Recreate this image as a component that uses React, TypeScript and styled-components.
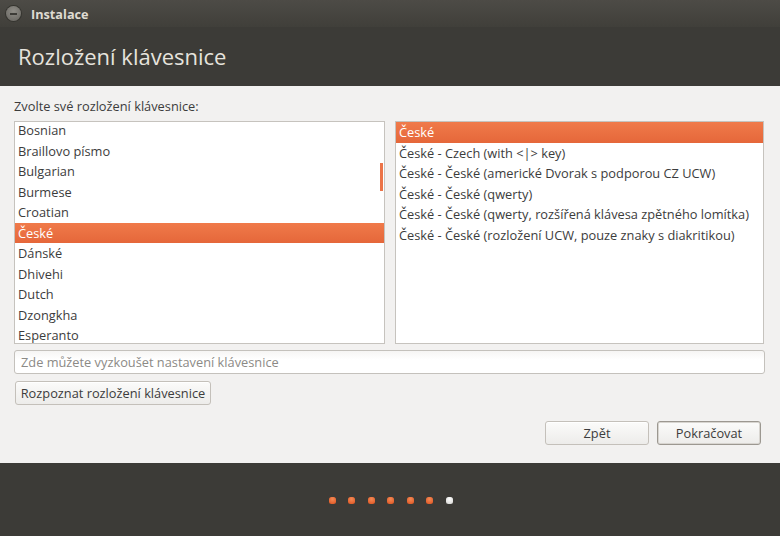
import React from 'react';
import styled, { createGlobalStyle } from 'styled-components';

const GlobalStyle = createGlobalStyle`
  html, body {
    margin: 0;
    padding: 0;
    background: #3c3b37;
  }
  * {
    box-sizing: border-box;
  }
`;

const layouts = [
  'Bosnian',
  'Braillovo písmo',
  'Bulgarian',
  'Burmese',
  'Croatian',
  'České',
  'Dánské',
  'Dhivehi',
  'Dutch',
  'Dzongkha',
  'Esperanto',
];

const variants = [
  'České',
  'České - Czech (with <|> key)',
  'České - České (americké Dvorak s podporou CZ UCW)',
  'České - České (qwerty)',
  'České - České (qwerty, rozšířená klávesa zpětného lomítka)',
  'České - České (rozložení UCW, pouze znaky s diakritikou)',
];

const App: React.FC = () => {
  return (
    <Window>
      <GlobalStyle />
      <TitleBar>
        <CloseButton>
          <span />
        </CloseButton>
        <WindowTitle>Instalace</WindowTitle>
      </TitleBar>
      <Header>
        <Heading>Rozložení klávesnice</Heading>
      </Header>
      <Content>
        <Label>Zvolte své rozložení klávesnice:</Label>
        <Lists>
          <ListBox>
            <ListInner $offset={-2}>
              {layouts.map((name) => (
                <Row key={name} $selected={name === 'České'}>
                  {name}
                </Row>
              ))}
            </ListInner>
            <ScrollThumb />
          </ListBox>
          <ListBox>
            <ListInner $offset={0}>
              {variants.map((name, i) => (
                <Row key={name} $selected={i === 0}>
                  {name}
                </Row>
              ))}
            </ListInner>
          </ListBox>
        </Lists>
        <Entry placeholder='Zde můžete vyzkoušet nastavení klávesnice' />
        <DetectButton>Rozpoznat rozložení klávesnice</DetectButton>
        <Actions>
          <Button>Zpět</Button>
          <Button $default>Pokračovat</Button>
        </Actions>
      </Content>
      <Footer>
        <Dots>
          {[0, 1, 2, 3, 4, 5, 6].map((i) => (
            <Dot key={i} $active={i < 6} />
          ))}
        </Dots>
      </Footer>
    </Window>
  );
};

export default App;

const Window = styled.div`
  width: 780px;
  height: 536px;
  display: flex;
  flex-direction: column;
  font-family: 'Open Sans', 'Liberation Sans', sans-serif;
  color: #3c3c3c;
  overflow: hidden;
`;

const TitleBar = styled.div`
  height: 27px;
  display: flex;
  align-items: center;
  padding-left: 6px;
  background: linear-gradient(#4d4b46, #403f3a);
`;

const CloseButton = styled.div`
  width: 15px;
  height: 15px;
  border-radius: 50%;
  background: radial-gradient(circle at 50% 35%, #8f8d87, #66645f);
  box-shadow: 0 0 0 1px #35342f;
  display: flex;
  align-items: center;
  justify-content: center;
  margin-right: 10px;

  span {
    width: 7px;
    height: 2px;
    background: #3c3b37;
  }
`;

const WindowTitle = styled.div`
  font-size: 12.7px;
  font-weight: 700;
  color: #dfdbd2;
`;

const Header = styled.div`
  height: 59px;
  background: #3c3b37;
  padding: 14px 0 0 18px;
`;

const Heading = styled.h1`
  margin: 0;
  font-size: 22px;
  font-weight: 400;
  color: #e6e3dd;
`;

const Content = styled.div`
  height: 377px;
  background: #f2f1f0;
  padding: 12px 15px 0 14px;
  display: flex;
  flex-direction: column;
`;

const Label = styled.div`
  font-size: 12.8px;
  height: 17px;
  line-height: 17px;
  margin-bottom: 6px;
`;

const Lists = styled.div`
  display: grid;
  grid-template-columns: 371px 369px;
  gap: 10px;
`;

const ListBox = styled.div`
  position: relative;
  height: 223px;
  background: #fff;
  border: 1px solid #c6c3be;
  overflow: hidden;
`;

const ListInner = styled.div<{ $offset: number }>`
  margin-top: ${(p) => p.$offset}px;
`;

const Row = styled.div<{ $selected?: boolean }>`
  height: 20.5px;
  line-height: 20.5px;
  padding-left: 3px;
  font-size: 12.8px;
  white-space: nowrap;
  color: ${(p) => (p.$selected ? '#fff' : '#3c3c3c')};
  background: ${(p) =>
    p.$selected ? 'linear-gradient(#f07a4a, #e5673a)' : 'transparent'};
`;

const ScrollThumb = styled.div`
  position: absolute;
  right: 1px;
  top: 41px;
  width: 3px;
  height: 28px;
  background: #ec7448;
`;

const Entry = styled.input`
  margin-top: 6px;
  height: 24px;
  width: 751px;
  border: 1px solid #c4c1bc;
  border-radius: 3px;
  background: linear-gradient(#f6f5f4, #fff 40%);
  padding: 0 6px;
  font-family: inherit;
  font-size: 12.8px;
  color: #3c3c3c;
  outline: none;

  &::placeholder {
    color: #8c8a86;
  }
`;

const Button = styled.button<{ $default?: boolean }>`
  height: 24px;
  width: 104px;
  border-radius: 3px;
  border: 1px solid ${(p) => (p.$default ? '#9c9891' : '#c4c0ba')};
  box-shadow: ${(p) =>
    p.$default ? 'inset 0 0 0 1px #d8d5d0' : 'inset 0 1px 0 #ffffff'};
  background: linear-gradient(#fbfbfa, #edecea);
  font-family: inherit;
  font-size: 12.8px;
  color: #3c3c3c;
  padding: 0;
  cursor: pointer;
`;

const DetectButton = styled(Button)`
  margin-top: 7px;
  margin-left: 1px;
  width: 196px;
`;

const Actions = styled.div`
  margin-top: 16px;
  display: flex;
  justify-content: flex-end;
  gap: 8px;
  padding-right: 4px;
`;

const Footer = styled.div`
  flex: 1;
  background: #3c3b37;
  display: flex;
  justify-content: center;
  padding-top: 34px;
  padding-left: 1px;
`;

const Dots = styled.div`
  display: flex;
  gap: 12.5px;
  height: 8px;
`;

const Dot = styled.div<{ $active?: boolean }>`
  width: 7px;
  height: 7px;
  border-radius: 2.5px;
  background: ${(p) =>
    p.$active
      ? 'radial-gradient(circle at 50% 30%, #f58a55, #dd5320)'
      : 'radial-gradient(circle at 50% 30%, #ffffff, #d4d3d0)'};
`;
